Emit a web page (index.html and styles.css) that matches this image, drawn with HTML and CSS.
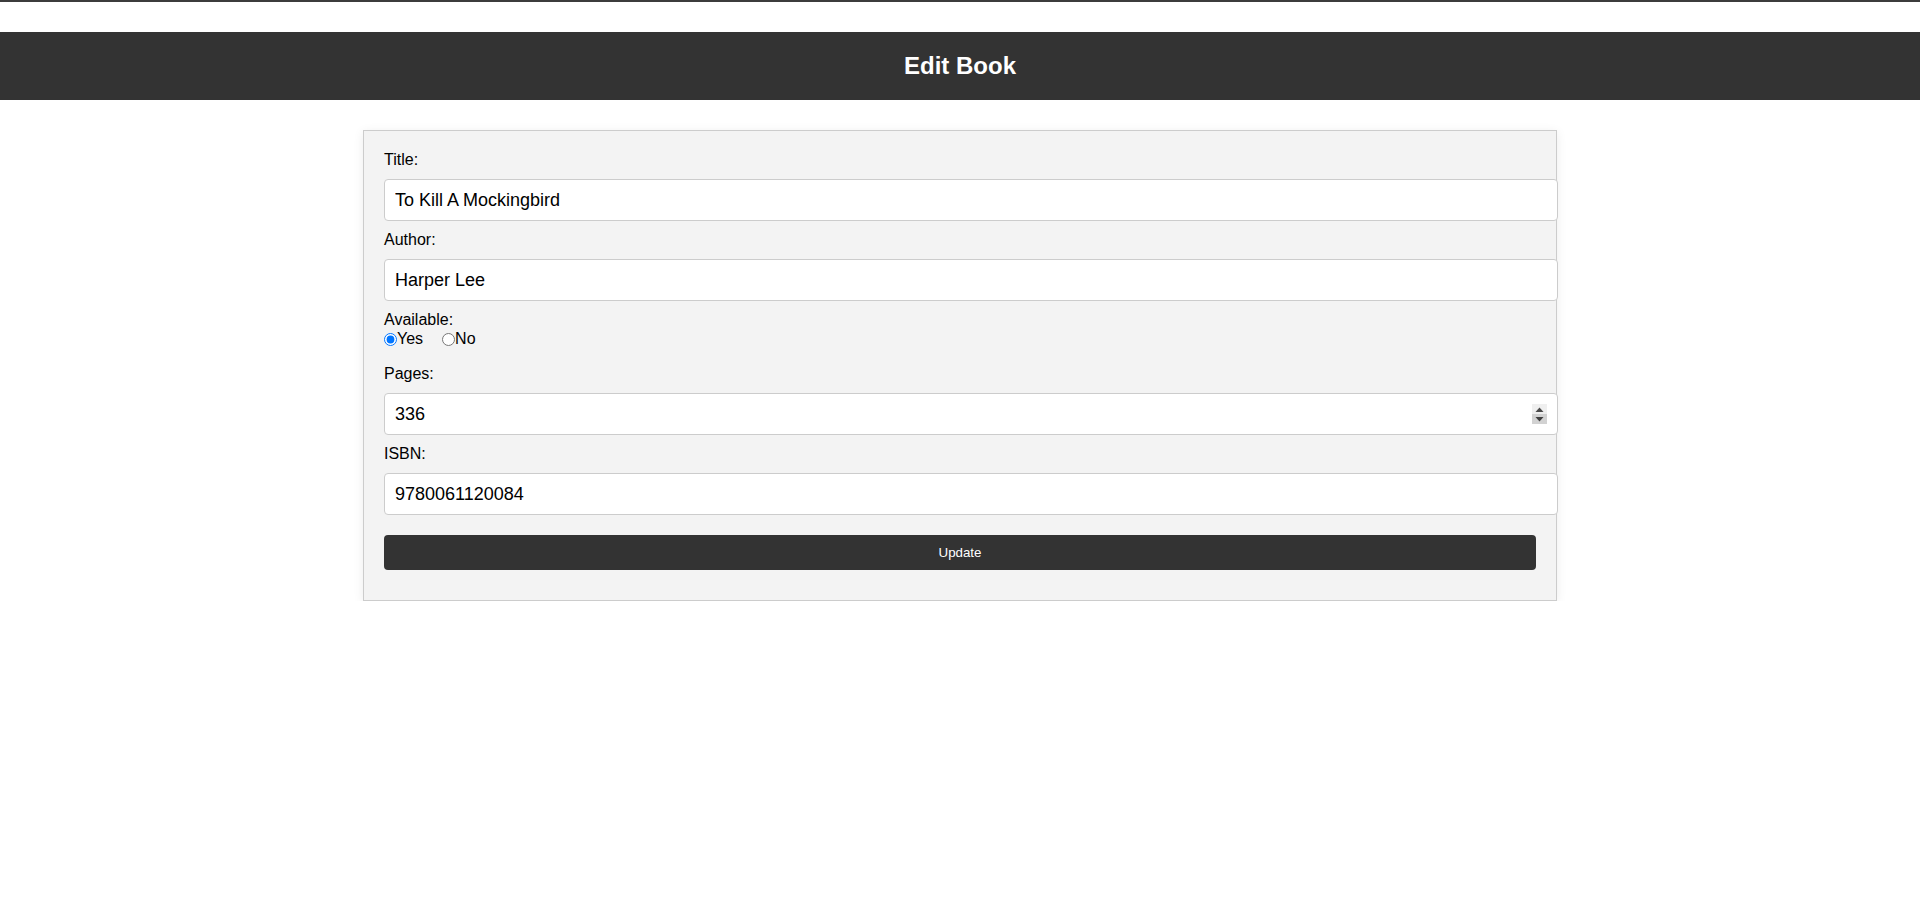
FILE: index.html
```html
<!DOCTYPE html>
<html lang="en">
<head>
<meta charset="utf-8">
<title>Edit Book</title>
<link rel="stylesheet" href="styles.css">
</head>
<body>
<div class="topline"></div>
<header class="header">
  <h1 class="header-title">Edit Book</h1>
</header>
<main class="main">
  <form class="card">
    <label class="field-label" for="title">Title:</label>
    <input class="field" id="title" type="text" value="To Kill A Mockingbird">
    <label class="field-label" for="author">Author:</label>
    <input class="field" id="author" type="text" value="Harper Lee">
    <span class="field-label">Available:</span>
    <div class="radios">
      <input class="radio" type="radio" name="available" id="yes" checked><label class="radio-label" for="yes">Yes</label>
      <input class="radio" type="radio" name="available" id="no"><label class="radio-label" for="no">No</label>
    </div>
    <label class="field-label" for="pages">Pages:</label>
    <div class="num-wrap">
      <input class="field field-number" id="pages" type="number" value="336">
      <span class="spinner" aria-hidden="true">
        <span class="spin spin-up"><svg width="9" height="5" viewBox="0 0 9 5"><path d="M0.5 5 L4.5 0.5 L8.5 5 Z" fill="#4a4a4a"/></svg></span>
        <span class="spin spin-down"><svg width="9" height="5" viewBox="0 0 9 5"><path d="M0.5 0 L4.5 4.5 L8.5 0 Z" fill="#3f3f3f"/></svg></span>
      </span>
    </div>
    <label class="field-label" for="isbn">ISBN:</label>
    <input class="field" id="isbn" type="text" value="9780061120084">
    <button class="btn" type="button">Update</button>
  </form>
</main>
</body>
</html>
```
FILE: styles.css
```css
html, body {
  margin: 0;
  padding: 0;
  background: #fff;
}
body {
  font-family: "Liberation Sans", Arial, sans-serif;
  font-size: 16px;
  color: #000;
}
.topline {
  height: 2px;
  background: #3c3c3c;
}
.header {
  margin-top: 30px;
  background: #333;
  padding: 20px;
  text-align: center;
}
.header-title {
  margin: 0;
  font-size: 24px;
  font-weight: bold;
  color: #fff;
}
.main {
  padding-top: 30px;
}
.card {
  width: 60%;
  margin: 0 auto;
  padding: 20px;
  background: #f3f3f3;
  border: 1px solid #ccc;
  box-shadow: 0 2px 10px rgba(0, 0, 0, 0.08);
  display: flex;
  flex-direction: column;
  align-items: flex-start;
}
.field-label {
  display: block;
  line-height: normal;
}
.field {
  box-sizing: content-box;
  width: 100%;
  height: 20px;
  margin: 10px 0;
  padding: 10px;
  border: 1px solid #ccc;
  border-radius: 4px;
  background: #fff;
  font-family: "Liberation Sans", Arial, sans-serif;
  font-size: 18px;
  color: #000;
  outline: none;
}
.num-wrap {
  position: relative;
  align-self: stretch;
  margin: 10px 0;
}
.num-wrap .field {
  display: block;
  margin: 0;
}
.field-number {
  -moz-appearance: textfield;
}
.field-number::-webkit-inner-spin-button,
.field-number::-webkit-outer-spin-button {
  -webkit-appearance: none;
  margin: 0;
}
.spinner {
  position: absolute;
  top: 11px;
  right: -11px;
  width: 15px;
  height: 20px;
  display: flex;
  flex-direction: column;
}
.spin {
  flex: 1;
  display: flex;
  align-items: center;
  justify-content: center;
}
.spin-up {
  background: #efefef;
}
.spin-down {
  background: #d2d2d2;
}
.radios {
  display: flex;
  align-items: center;
  height: 19px;
  margin-bottom: 17px;
}
.radio {
  width: 13px;
  height: 13px;
  margin: 2px 0 0 0;
}
.radio-label {
  margin-right: 19px;
}
.btn {
  align-self: stretch;
  margin: 10px 0;
  padding: 10px;
  border: none;
  border-radius: 4px;
  background: #333;
  color: #fff;
  font-family: "Liberation Sans", Arial, sans-serif;
  font-size: 13.333px;
  cursor: pointer;
}
```
